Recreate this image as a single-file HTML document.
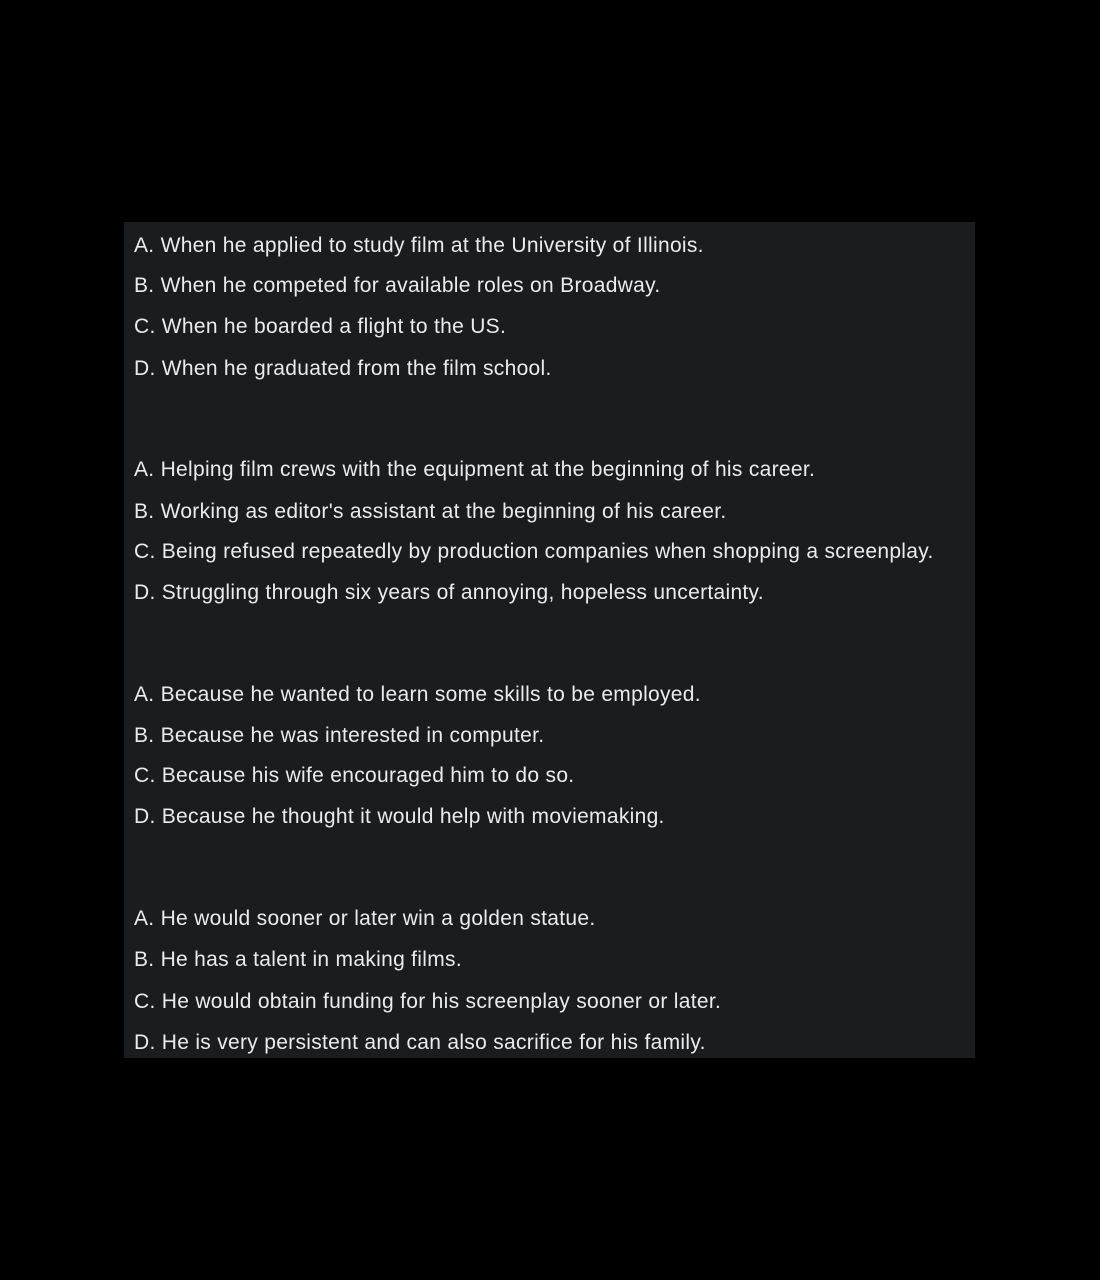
<!DOCTYPE html>
<html><head><meta charset="utf-8"><style>
html,body{margin:0;padding:0;background:#000;width:1100px;height:1280px;overflow:hidden}
#box{position:absolute;left:124px;top:222px;width:851px;height:836px;background:#1b1c1e}
.l{position:absolute;left:134px;font-family:"Liberation Sans",Arial,sans-serif;font-size:21px;letter-spacing:0.3px;line-height:24px;color:#ebebeb;white-space:nowrap}
</style></head><body>
<div id="box"></div>
<div class="l" style="top:234px">A. When he applied to study film at the University of Illinois.</div>
<div class="l" style="top:274px">B. When he competed for available roles on Broadway.</div>
<div class="l" style="top:315px">C. When he boarded a flight to the US.</div>
<div class="l" style="top:357px">D. When he graduated from the film school.</div>
<div class="l" style="top:458px">A. Helping film crews with the equipment at the beginning of his career.</div>
<div class="l" style="top:500px">B. Working as editor's assistant at the beginning of his career.</div>
<div class="l" style="top:540px">C. Being refused repeatedly by production companies when shopping a screenplay.</div>
<div class="l" style="top:581px">D. Struggling through six years of annoying, hopeless uncertainty.</div>
<div class="l" style="top:683px">A. Because he wanted to learn some skills to be employed.</div>
<div class="l" style="top:724px">B. Because he was interested in computer.</div>
<div class="l" style="top:764px">C. Because his wife encouraged him to do so.</div>
<div class="l" style="top:805px">D. Because he thought it would help with moviemaking.</div>
<div class="l" style="top:907px">A. He would sooner or later win a golden statue.</div>
<div class="l" style="top:948px">B. He has a talent in making films.</div>
<div class="l" style="top:990px">C. He would obtain funding for his screenplay sooner or later.</div>
<div class="l" style="top:1031px">D. He is very persistent and can also sacrifice for his family.</div>
</body></html>
